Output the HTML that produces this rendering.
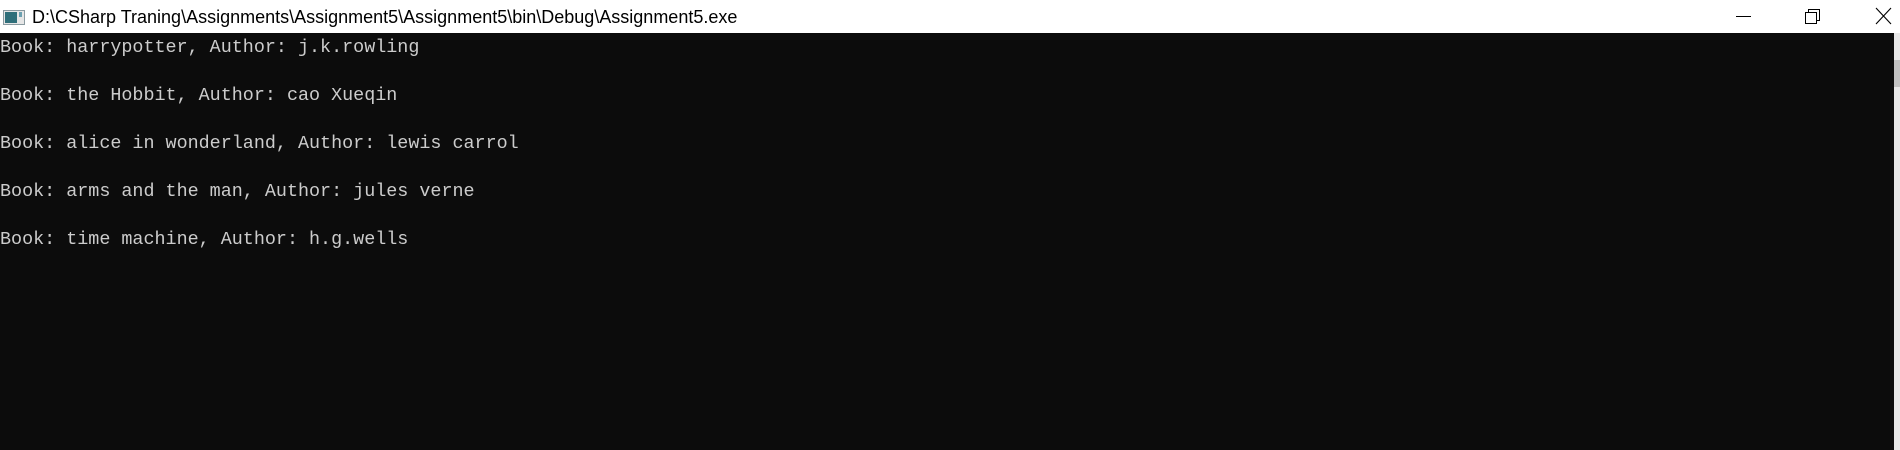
<!DOCTYPE html>
<html><head><meta charset="utf-8"><style>
html,body{margin:0;padding:0;width:1900px;height:450px;overflow:hidden;background:#0c0c0c}
#tb{position:absolute;left:0;top:0;width:1900px;height:33px;background:#fff}
#title{position:absolute;left:32px;top:7px;font:18px "Liberation Sans",sans-serif;color:#000;white-space:nowrap}
#con{position:absolute;left:0;top:36px;font:18.4px/24px "Liberation Mono",monospace;color:#cccccc;white-space:pre}
#sb{position:absolute;right:0;top:33px;width:6px;height:417px;background:#e8e8e8}
#th{position:absolute;right:0;top:60px;width:6px;height:27px;background:#c2c2c2}
</style></head><body>
<div id="tb">
<svg width="26" height="33" style="position:absolute;left:2px;top:0">
<rect x="1.5" y="10.5" width="21" height="14" fill="#e6e6e6" stroke="#8a9aa0"/>
<rect x="3" y="12" width="12" height="11" fill="#2f6f7a"/>
<rect x="17" y="12" width="3" height="5" fill="#6ba0b0"/>
</svg>
<div id="title">D:\CSharp Traning\Assignments\Assignment5\Assignment5\bin\Debug\Assignment5.exe</div>
<svg width="1900" height="33" style="position:absolute;left:0;top:0">
<line x1="1736" y1="16.5" x2="1751" y2="16.5" stroke="#000" stroke-width="1"/>
<rect x="1805.5" y="12.5" width="11" height="11" fill="none" stroke="#000"/>
<path d="M1808.5 12.5V9.5H1819.5V20.5H1816.5" fill="none" stroke="#000"/>
<path d="M1876 8L1891 24M1891 8L1876 24" stroke="#000" stroke-width="1.1"/>
</svg>
</div>
<div id="con">Book: harrypotter, Author: j.k.rowling

Book: the Hobbit, Author: cao Xueqin

Book: alice in wonderland, Author: lewis carrol

Book: arms and the man, Author: jules verne

Book: time machine, Author: h.g.wells</div>
<div id="sb"></div><div id="th"></div>
</body></html>
